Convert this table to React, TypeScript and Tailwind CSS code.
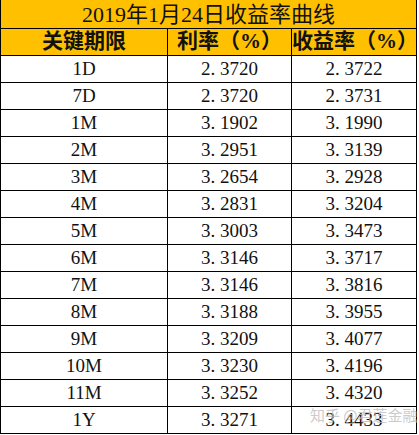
const rows: [string, string, string][] = [
  ["1D", "2.3720", "2.3722"],
  ["7D", "2.3720", "2.3731"],
  ["1M", "3.1902", "3.1990"],
  ["2M", "3.2951", "3.3139"],
  ["3M", "3.2654", "3.2928"],
  ["4M", "3.2831", "3.3204"],
  ["5M", "3.3003", "3.3473"],
  ["6M", "3.3146", "3.3717"],
  ["7M", "3.3146", "3.3816"],
  ["8M", "3.3188", "3.3955"],
  ["9M", "3.3209", "3.4077"],
  ["10M", "3.3230", "3.4196"],
  ["11M", "3.3252", "3.4320"],
  ["1Y", "3.3271", "3.4433"],
];

const serif = "font-['Liberation_Serif','Noto_Sans_CJK_SC',serif]";

// the dot in the source font takes a full half-width cell
function Num({ v }: { v: string }) {
  const [a, b] = v.split(".");
  return (
    <span>
      {a}
      <span className="pr-[0.25em]">.</span>
      {b}
    </span>
  );
}

export default function App() {
  return (
    <div className="relative w-[419px] h-[435px] bg-white">
      <div className="w-[417px] border-l border-r border-b border-black text-[#111]">
        <div
          className={`h-[28px] flex items-center justify-center bg-[#FFC000] text-[22px] ${serif}`}
        >
          2019年1月24日收益率曲线
        </div>
        <div className="h-[27px] flex border-t border-black bg-[#FFC000] text-[21px] font-bold font-['Liberation_Serif','Noto_Sans_CJK_SC',serif]">
          <div className="w-[166px] flex items-center justify-center">关键期限</div>
          <div className="w-[124px] flex items-center justify-center border-l border-black">
            利率（%）
          </div>
          <div className="w-[125px] flex items-center justify-center border-l border-black">
            收益率（%）
          </div>
        </div>
        {rows.map(([k, r, y]) => (
          <div key={k} className={`h-[27px] flex border-t border-black text-[19px] ${serif}`}>
            <div className="w-[166px] flex items-center justify-center">{k}</div>
            <div className="w-[124px] flex items-center justify-center border-l border-black">
              <Num v={r} />
            </div>
            <div className="w-[125px] flex items-center justify-center border-l border-black">
              <Num v={y} />
            </div>
          </div>
        ))}
      </div>
      <div className="absolute left-[310px] top-[404px] text-[15px] text-[#bdbdbd]/80 font-['Noto_Sans_CJK_SC',sans-serif] whitespace-nowrap">
        知乎 @君莲金融
      </div>
    </div>
  );
}
